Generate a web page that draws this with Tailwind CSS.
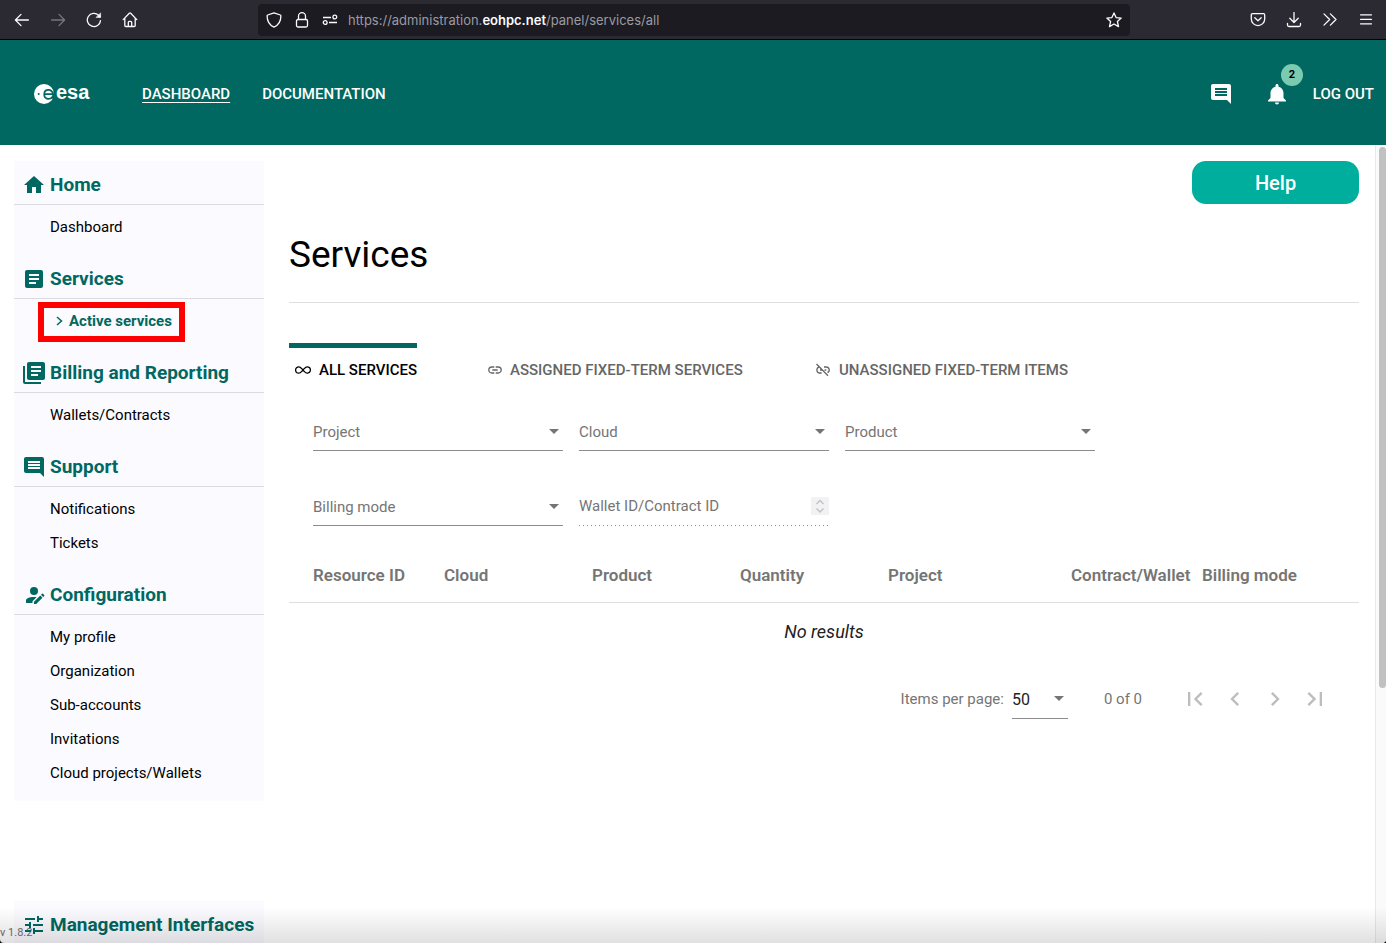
<!DOCTYPE html>
<html lang="en" class="overflow-hidden bg-black">
<head>
<meta charset="utf-8">
<meta name="viewport" content="width=device-width, initial-scale=1">
<title>Services</title>
<script src="https://cdn.jsdelivr.net/npm/@tailwindcss/browser@4"></script>
</head>
<body class="flex h-screen flex-col overflow-hidden rounded-b-sm bg-white font-['Roboto','Noto_Sans',sans-serif] text-[15px] leading-[22px] text-black">

<!-- Browser toolbar -->
<div class="flex h-10 shrink-0 items-center border-b border-black bg-[#2b2a33] text-[#fbfbfe]">
  <div class="flex w-[258px] shrink-0 items-center gap-5 pl-3.5">
    <button aria-label="Back" class="size-4"><svg viewBox="0 0 16 16" class="size-4" fill="none" stroke="currentColor" stroke-width="1.3" stroke-linecap="round" stroke-linejoin="round"><path d="M14.4 8H1.6M7 2.4 1.4 8 7 13.6"/></svg></button>
    <button aria-label="Forward" class="size-4 text-[#77767e]"><svg viewBox="0 0 16 16" class="size-4" fill="none" stroke="currentColor" stroke-width="1.3" stroke-linecap="round" stroke-linejoin="round"><path d="M1.6 8h12.8M9 2.4 14.6 8 9 13.6"/></svg></button>
    <button aria-label="Reload" class="size-4"><svg viewBox="0 0 16 16" class="size-4" fill="none" stroke="currentColor" stroke-width="1.3" stroke-linecap="round" stroke-linejoin="round"><path d="M14.5 8.6A6.6 6.6 0 1 1 12.6 3.300L14 4.800"/><path d="M14.600 1.200v4.200h-4.200z" fill="currentColor" stroke-width=".6"/></svg></button>
    <button aria-label="Home" class="size-4"><svg viewBox="0 0 16 16" class="size-4" fill="none" stroke="currentColor" stroke-width="1.3" stroke-linecap="round" stroke-linejoin="round"><path d="M1.200 7.600 7.300 1.300q.7-.6 1.400 0l6.100 6.300M2.800 6.300v7.200q0 1 1 1h8.400q1 0 1-1V6.300M6.300 14.400v-4q0-1 1-1h1.400q1 0 1 1v4"/></svg></button>
  </div>
  <div class="flex h-8 w-[872px] items-center rounded bg-[#1c1b22] pr-2 pl-2">
    <svg viewBox="0 0 16 16" class="size-4 shrink-0" fill="none" stroke="currentColor" stroke-width="1.3" stroke-linejoin="round"><path d="M8 .8 14.300 3q.6.200.6.800c0 5-2 9.300-6.900 11.300C3.100 13.100 1.100 8.800 1.100 3.800q0-.6.6-.8z"/></svg>
    <svg viewBox="0 0 16 16" class="ml-3 size-4 shrink-0" fill="none" stroke="currentColor" stroke-width="1.3"><rect x="2.500" y="7.500" width="11" height="7.500" rx="1.500"/><path d="M4.500 7.500V4.200a3.500 3.500 0 0 1 7 0v3.300"/></svg>
    <svg viewBox="0 0 16 16" class="ml-3 size-4 shrink-0" fill="none" stroke="currentColor" stroke-width="1.300"><path d="M1 5.500h8M7 10.500h8"/><circle cx="12.800" cy="5" r="1.900"/><circle cx="3.200" cy="10.500" r="1.900"/></svg>
    <div class="ml-2.5 flex-1 truncate font-['Inter',sans-serif] text-[13px] text-[#9b9aa2]">https://administration.<span class="font-semibold text-[#fbfbfe]">eohpc.net</span>/panel/services/all</div>
    <button aria-label="Bookmark" class="size-4"><svg viewBox="0 0 16 16" class="size-4" fill="none" stroke="currentColor" stroke-width="1.3" stroke-linejoin="round"><path d="m8 .900 2.100 4.700 5.100.5-3.800 3.400 1.100 5.100L8 12l-4.500 2.600 1.100-5.100L.8 6.100l5.100-.5z"/></svg></button>
  </div>
  <div class="ml-auto flex items-center gap-5 pr-3">
    <button aria-label="Pocket" class="size-4"><svg viewBox="0 0 16 16" class="size-4" fill="none" stroke="currentColor" stroke-width="1.300" stroke-linecap="round" stroke-linejoin="round"><path d="M2.500 1.700h11q1.200 0 1.200 1.200v4a6.700 6.700 0 0 1-13.400 0v-4q0-1.200 1.200-1.200z"/><path d="m4.800 5.700 3.200 3 3.200-3"/></svg></button>
    <button aria-label="Downloads" class="size-4"><svg viewBox="0 0 16 16" class="size-4" fill="none" stroke="currentColor" stroke-width="1.300" stroke-linecap="round" stroke-linejoin="round"><path d="M8 .6v9.500M3.800 6.300 8 10.500l4.200-4.200M1.500 11.500V13q0 1.500 1.500 1.500h10q1.500 0 1.500-1.500v-1.500"/></svg></button>
    <button aria-label="More tools" class="size-4"><svg viewBox="0 0 16 16" class="size-4" fill="none" stroke="currentColor" stroke-width="1.300" stroke-linecap="round" stroke-linejoin="round"><path d="M2 1.900 7.600 7.500 2 13.100M8.400 1.900 14 7.500l-5.600 5.600"/></svg></button>
    <button aria-label="Menu" class="size-4"><svg viewBox="0 0 16 16" class="size-4" fill="none" stroke="currentColor" stroke-width="1.200" stroke-linecap="round"><path d="M2.500 2.800h11M2.500 7.300h11M2.500 11.800h11"/></svg></button>
  </div>
</div>

<!-- Site header -->
<header class="flex h-[105px] shrink-0 items-center bg-[#006860] pt-0.5 pr-3 pl-8.5 text-white">
  <a href="#" aria-label="esa" class="flex w-[108px] shrink-0 items-center gap-0.5">
    <svg viewBox="0 0 20 20" class="size-5"><circle cx="10" cy="10" r="10" fill="#fff"/><path d="M20.500 5v10l-4-.5L19 10z" fill="#006860"/><circle cx="4.700" cy="10" r="1" fill="#006860"/><path d="M11 10.200h7.800c0-5.700-8.600-5.700-8.600.2 0 4.700 5 5.600 7.800 3" fill="none" stroke="#006860" stroke-width="1.700"/></svg>
    <span class="-mt-1 font-['Liberation_Sans',Arial,sans-serif] text-[20px] font-bold">esa</span>
  </a>
  <nav class="flex gap-8 text-[15px] font-medium">
    <a href="#" class="underline underline-offset-3">DASHBOARD</a>
    <a href="#">DOCUMENTATION</a>
  </nav>
  <div class="ml-auto flex items-center">
    <button aria-label="Messages"><svg viewBox="0 0 24 24" class="size-6" fill="currentColor"><path d="M21.990 4c0-1.100-.89-2-1.990-2H4c-1.100 0-2 .9-2 2v12c0 1.100.9 2 2 2h14l4 4-.01-18zM18 14H6v-2h12v2zm0-3H6V9h12v2zm0-3H6V6h12v2z"/></svg></button>
    <button aria-label="Notifications, 2 new" class="relative ml-8"><svg viewBox="0 0 24 24" class="size-6" fill="currentColor"><path d="M12 22.500c1.100 0 2-.9 2-2h-4c0 1.100.89 2 2 2zm6.500-6.500v-5c0-3.070-2-5.640-5-6.320V3.500c0-.83-.67-1.500-1.500-1.500s-1.500.67-1.500 1.500v1.180C7.500 5.360 5.500 7.920 5.500 11v5l-2.500 2.500v1h18v-1L18.500 16z"/></svg>
      <span class="absolute -top-[18px] left-4 flex size-[22px] items-center justify-center rounded-full bg-[#7bcbb1] text-[11px] font-bold text-black">2</span></button>
    <a href="#" class="ml-6 font-medium">LOG OUT</a>
  </div>
</header>

<div class="relative flex min-h-0 flex-1">
  <!-- Sidebar -->
  <aside class="w-[264px] shrink-0 overflow-hidden pt-4 pl-3.5">
    <nav class="bg-[#fafaff]">
      <section class="pb-[11px]">
        <h2 class="mb-[5px] flex h-11 items-center gap-1 border-b border-[#dadae0] pt-1 pl-2 text-[19px] font-bold text-[#006860]"><svg viewBox="0 0 24 24" class="size-6" fill="currentColor"><path d="M10 20v-6h4v6h5v-8h3L12 3 2 12h3v8z"/></svg>Home</h2>
        <a href="#" class="flex h-8.5 items-center pl-9">Dashboard</a>
      </section>
      <section class="pb-[11px]">
        <h2 class="mb-[5px] flex h-11 items-center gap-1 border-b border-[#dadae0] pt-1 pl-2 text-[19px] font-bold text-[#006860]"><svg viewBox="0 0 24 24" class="size-6" fill="currentColor"><path d="M19 3H5c-1.100 0-2 .9-2 2v14c0 1.100.9 2 2 2h14c1.100 0 2-.9 2-2V5c0-1.100-.9-2-2-2zm-5 14H7v-2h7v2zm3-4H7v-2h10v2zm0-4H7V7h10v2z"/></svg>Services</h2>
        <div class="relative h-8.5">
          <a href="#" class="absolute -top-0.5 left-6 flex h-10 w-[147px] items-center gap-1.5 border-6 border-[#ff0000] pb-0.5 pl-3 font-bold text-[#006860]"><svg viewBox="0 0 7 10" class="h-2.5 w-[7px]" fill="none" stroke="currentColor" stroke-width="1.500"><path d="m1 1 4.500 4L1 9"/></svg><span class="whitespace-nowrap">Active services</span></a>
        </div>
      </section>
      <section class="pb-[11px]">
        <h2 class="mb-[5px] flex h-11 items-center gap-1 border-b border-[#dadae0] pt-1 pl-2 text-[19px] font-bold text-[#006860]"><svg viewBox="0 0 24 24" class="size-6" fill="currentColor"><path d="M3 5H1v16c0 1.100.9 2 2 2h16v-2H3V5z"/><path d="M21 1H7c-1.100 0-2 .9-2 2v14c0 1.100.9 2 2 2h14c1.100 0 2-.9 2-2V3c0-1.100-.9-2-2-2zm-5 14H9v-2h7v2zm3-4H9V9h10v2zm0-4H9V5h10v2z"/></svg>Billing and Reporting</h2>
        <a href="#" class="flex h-8.5 items-center pl-9">Wallets/Contracts</a>
      </section>
      <section class="pb-[11px]">
        <h2 class="mb-[5px] flex h-11 items-center gap-1 border-b border-[#dadae0] pt-1 pl-2 text-[19px] font-bold text-[#006860]"><svg viewBox="0 0 24 24" class="size-6" fill="currentColor"><path d="M21.990 4c0-1.100-.89-2-1.990-2H4c-1.100 0-2 .9-2 2v12c0 1.100.9 2 2 2h14l4 4-.01-18zM18 14H6v-2h12v2zm0-3H6V9h12v2zm0-3H6V6h12v2z"/></svg>Support</h2>
        <a href="#" class="flex h-8.5 items-center pl-9">Notifications</a>
        <a href="#" class="flex h-8.5 items-center pl-9">Tickets</a>
      </section>
      <section class="pb-[11px]">
        <h2 class="mb-[5px] flex h-11 items-center gap-1 border-b border-[#dadae0] pt-1 pl-2 text-[19px] font-bold text-[#006860]"><svg viewBox="0 0 24 24" class="size-6" fill="currentColor"><circle cx="12" cy="8" r="4"/><path d="M4 20v-2.500C4 15 9 13.600 14.500 14.300L10.500 18.300V20zM12 21v-2.200l6.300-6.300 2.200 2.200L14.200 21zM19 11.800l1-1q.5-.4 1 0l1.200 1.200q.4.500 0 1l-1 1z"/></svg>Configuration</h2>
        <a href="#" class="flex h-8.5 items-center pl-9">My profile</a>
        <a href="#" class="flex h-8.5 items-center pl-9">Organization</a>
        <a href="#" class="flex h-8.5 items-center pl-9">Sub-accounts</a>
        <a href="#" class="flex h-8.5 items-center pl-9">Invitations</a>
        <a href="#" class="flex h-8.5 items-center pl-9">Cloud projects/Wallets</a>
      </section>
    </nav>
    <nav class="mt-[100px] bg-[#fafaff]">
      <h2 class="flex h-11 items-center gap-1 border-b border-[#dadae0] pt-1 pl-2 text-[19px] font-bold whitespace-nowrap text-[#006860]"><svg viewBox="0 0 24 24" class="size-6 shrink-0" fill="currentColor"><path d="M3 17v2h6v-2H3zM3 5v2h10V5H3zm10 16v-2h8v-2h-8v-2h-2v6h2zM7 9v2H3v2h4v2h2V9H7zm14 4v-2H11v2h10zm-6-4h2V7h4V5h-4V3h-2v6z"/></svg>Management Interfaces</h2>
    </nav>
  </aside>

  <!-- Content -->
  <main class="min-w-0 flex-1 overflow-hidden pt-4 pr-4 pl-[25px]">
    <div class="flex justify-end">
      <button class="h-[43px] w-[167px] rounded-[14px] bg-[#00ae9d] text-[20px] font-medium text-white">Help</button>
    </div>
    <h1 class="mt-[26px] border-b border-[#dfdfdf] pb-[22px] text-[37px] leading-[50px]">Services</h1>

    <div role="tablist" class="mt-10 flex text-[15px] font-medium text-[#666]">
      <button role="tab" aria-selected="true" class="flex h-12 w-32 items-center gap-2 border-t-5 border-[#006860] pl-1.5 whitespace-nowrap text-black"><svg viewBox="0 0 16 8" class="h-2 w-4" fill="none" stroke="currentColor" stroke-width="1.300"><path d="M8 4C6.500 2.500 5.500.8 3.800.8a3.200 3.200 0 0 0 0 6.400C5.500 7.200 6.500 5.500 8 4s2.500-3.200 4.200-3.200a3.200 3.200 0 0 1 0 6.400C10.500 7.200 9.500 5.500 8 4z"/></svg>ALL SERVICES</button>
      <button role="tab" aria-selected="false" class="ml-[71px] flex h-12 w-[257px] items-center gap-2 border-t-5 border-transparent whitespace-nowrap"><svg viewBox="0 0 14 8" class="h-2 w-3.5" fill="none" stroke="currentColor" stroke-width="1.300"><path d="M6.300 1H3.800a3 3 0 0 0 0 6h2.500M7.700 1h2.500a3 3 0 0 1 0 6H7.700M4.300 4h5.400"/></svg>ASSIGNED FIXED-TERM SERVICES</button>
      <button role="tab" aria-selected="false" class="ml-[70px] flex h-12 items-center gap-2 border-t-5 border-transparent whitespace-nowrap"><svg viewBox="0 0 16 14" class="h-3.5 w-4" fill="none" stroke="currentColor" stroke-width="1.300"><path d="M1.500 1 13 12.800M4 4.200a3 3 0 0 0 .3 5.800h2.400M5 7h2M9 4h2.300a3 3 0 0 1 1.200 5.700M9.500 7h1.800"/></svg>UNASSIGNED FIXED-TERM ITEMS</button>
    </div>

    <form class="mt-[23px] flex max-w-[840px] flex-wrap gap-x-4 gap-y-[38px] pl-6 text-[#757575]">
      <div class="relative w-[250px]"><select aria-label="Project" class="h-[37px] w-full appearance-none border-b border-[#8c8c8c]"><option>Project</option></select><span class="pointer-events-none absolute top-[15px] right-1 h-0 w-0 border-x-5 border-t-5 border-x-transparent"></span></div>
      <div class="relative w-[250px]"><select aria-label="Cloud" class="h-[37px] w-full appearance-none border-b border-[#8c8c8c]"><option>Cloud</option></select><span class="pointer-events-none absolute top-[15px] right-1 h-0 w-0 border-x-5 border-t-5 border-x-transparent"></span></div>
      <div class="relative w-[250px]"><select aria-label="Product" class="h-[37px] w-full appearance-none border-b border-[#8c8c8c]"><option>Product</option></select><span class="pointer-events-none absolute top-[15px] right-1 h-0 w-0 border-x-5 border-t-5 border-x-transparent"></span></div>
      <div class="relative w-[250px]"><select aria-label="Billing mode" class="h-[37px] w-full appearance-none border-b border-[#8c8c8c]"><option>Billing mode</option></select><span class="pointer-events-none absolute top-[15px] right-1 h-0 w-0 border-x-5 border-t-5 border-x-transparent"></span></div>
      <div class="flex h-[37px] w-[250px] items-center bg-[linear-gradient(to_right,#8c8c8c_25%,transparent_25%)] bg-[length:4px_1px] bg-bottom-left bg-repeat-x pb-[3px]">
        <input type="text" inputmode="numeric" disabled aria-label="Wallet ID/Contract ID" placeholder="Wallet ID/Contract ID" class="min-w-0 flex-1 placeholder:text-[#757575]">
        <svg viewBox="0 0 18 18" class="size-[18px] bg-[#f2f2f4]" fill="none" stroke="#c2c2c9" stroke-width="1.500"><path d="m5.500 7 3.500-3.500L12.500 7M5.500 11.500 9 15l3.500-3.500"/></svg>
      </div>
    </form>

    <table class="mt-[21px] w-full table-fixed text-left">
      <colgroup><col class="w-[155px]"><col class="w-[148px]"><col class="w-[148px]"><col class="w-[148px]"><col class="w-[183px]"><col class="w-[131px]"><col></colgroup>
      <thead class="text-[17px] whitespace-nowrap text-[#757575]">
        <tr class="h-[55px] border-b border-[#dfdfdf]">
          <th class="pt-0.5 pl-6 font-semibold">Resource ID</th><th class="pt-0.5 font-semibold">Cloud</th><th class="pt-0.5 font-semibold">Product</th><th class="pt-0.5 font-semibold">Quantity</th><th class="pt-0.5 font-semibold">Project</th><th class="pt-0.5 font-semibold">Contract/Wallet</th><th class="pt-0.5 font-semibold">Billing mode</th>
        </tr>
      </thead>
      <tbody><tr class="h-[57px]"><td colspan="7" class="pt-0.5 text-center text-[18px] text-[#222] italic">No results</td></tr></tbody>
    </table>

    <div class="mt-5 flex h-10 items-center justify-end pr-6 text-[#757575]">
      <label for="page-size">Items per page:</label>
      <div class="relative mr-9 ml-2 w-14"><select id="page-size" class="block h-10 w-full appearance-none border-b border-[#8c8c8c] pt-0.5 text-[16px] text-[#222]"><option>50</option></select><span class="pointer-events-none absolute top-[17px] right-1 h-0 w-0 border-x-5 border-t-5 border-x-transparent"></span></div>
      <span class="mr-[33px]">0 of 0</span>
      <div class="flex text-[#bdbdbd]">
        <button aria-label="First page" disabled class="flex size-10 items-center justify-center"><svg viewBox="0 0 24 24" class="size-7" fill="currentColor"><path d="M18.410 16.590 13.820 12l4.590-4.590L17 6l-6 6 6 6zM6 6h2v12H6z"/></svg></button>
        <button aria-label="Previous page" disabled class="flex size-10 items-center justify-center"><svg viewBox="0 0 24 24" class="size-7" fill="currentColor"><path d="M15.410 7.410 14 6l-6 6 6 6 1.410-1.410L10.830 12z"/></svg></button>
        <button aria-label="Next page" disabled class="flex size-10 items-center justify-center"><svg viewBox="0 0 24 24" class="size-7" fill="currentColor"><path d="M10 6 8.590 7.410 13.170 12l-4.580 4.590L10 18l6-6z"/></svg></button>
        <button aria-label="Last page" disabled class="flex size-10 items-center justify-center"><svg viewBox="0 0 24 24" class="size-7" fill="currentColor"><path d="M5.590 7.410 10.180 12l-4.590 4.590L7 18l6-6-6-6zM16 6h2v12h-2z"/></svg></button>
      </div>
    </div>
  </main>

  <!-- Scrollbar -->
  <div class="flex w-[11px] shrink-0 justify-end border-l border-[#e8e8e8] bg-[#fafafa] pt-0.5"><div class="h-[68%] w-[7px] rounded-full bg-[#c1c1c1]"></div></div>

  <div class="pointer-events-none absolute inset-x-0 bottom-0 h-9 bg-linear-to-t from-black/12 to-transparent"></div>
  <span class="absolute bottom-0 left-0 text-[11px] leading-5 text-[#666]">v 1.8.2</span>
</div>
</body>
</html>
